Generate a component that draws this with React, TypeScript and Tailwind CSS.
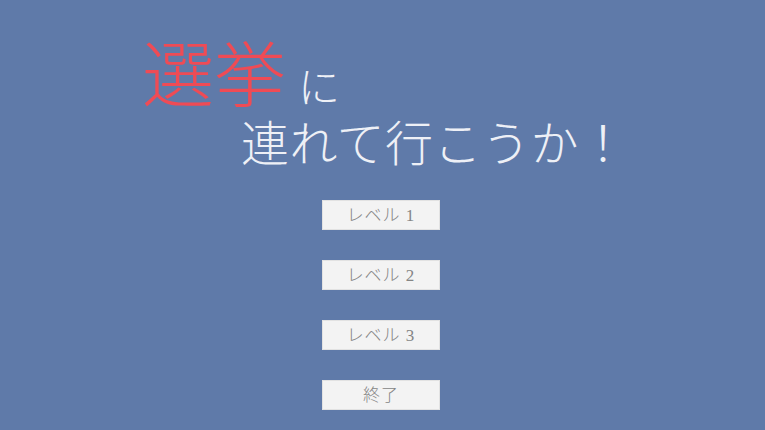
export default function App() {
  const levels = ["レベル 1", "レベル 2", "レベル 3", "終了"];
  return (
    <div
      className="w-[765px] h-[430px] bg-[#5f7aa9] overflow-hidden flex flex-col"
      style={{ fontFamily: '"Noto Sans CJK JP", sans-serif' }}
    >
      {/* title */}
      <div className="flex items-end pl-[142px] h-[106px]">
        <span className="text-[72px] leading-none text-[#ef4b55] font-light">選挙</span>
        <span className="text-[42px] leading-none text-[#eef0f6] font-light ml-[12px]">に</span>
      </div>
      <div className="pl-[241px] mt-[10px] text-[48px] leading-none text-[#eef0f6] font-light tracking-[0.5px]">
        連れて行こうか！
      </div>

      {/* menu */}
      <div className="flex flex-col items-start gap-[30px] mt-[36px] pl-[322px]">
        {levels.map((l) => (
          <button
            key={l}
            className="w-[118px] h-[30px] bg-[#f3f3f3] text-[#858585] text-[17px] tracking-[1px] leading-none flex items-center justify-center border border-[#e2e2e2] font-light"
            style={{ fontFamily: '"Liberation Serif", "Noto Sans CJK JP", serif' }}
          >
            {l}
          </button>
        ))}
      </div>
    </div>
  );
}
